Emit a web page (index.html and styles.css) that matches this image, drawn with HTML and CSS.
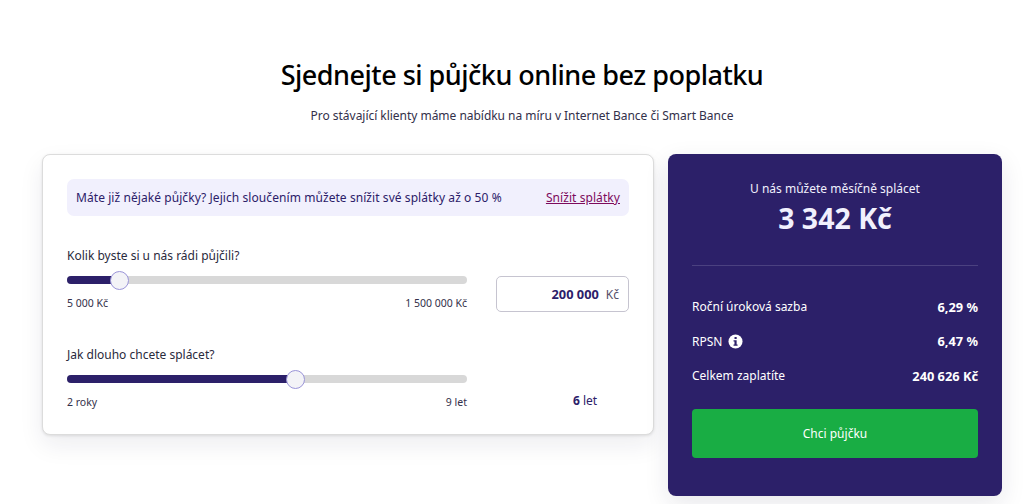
FILE: index.html
```html
<!DOCTYPE html>
<html lang="cs">
<head>
<meta charset="utf-8">
<title>Půjčka online</title>
<link rel="stylesheet" href="styles.css">
</head>
<body>
<header class="hero">
  <h1>Sjednejte si půjčku online bez poplatku</h1>
  <p>Pro stávající klienty máme nabídku na míru v Internet Bance či Smart Bance</p>
</header>
<main class="calc">
  <section class="card">
    <div class="banner">
      <span>Máte již nějaké půjčky? Jejich sloučením můžete snížit své splátky až o 50 %</span>
      <a href="#">Snížit splátky</a>
    </div>
    <div class="field first">
      <div class="slider">
        <label>Kolik byste si u nás rádi půjčili?</label>
        <div class="track"><div class="fill amount"><span class="thumb"></span></div></div>
        <div class="ends"><span>5 000 Kč</span><span>1 500 000 Kč</span></div>
      </div>
      <div class="input"><b>200 000</b><span>Kč</span></div>
    </div>
    <div class="field second">
      <div class="slider">
        <label>Jak dlouho chcete splácet?</label>
        <div class="track"><div class="fill term"><span class="thumb"></span></div></div>
        <div class="ends"><span>2 roky</span><span>9 let</span></div>
      </div>
      <div class="years"><b>6</b> let</div>
    </div>
  </section>
  <aside class="panel">
    <div class="pay-label">U nás můžete měsíčně splácet</div>
    <div class="pay-value">3 342 Kč</div>
    <hr>
    <div class="row"><span>Roční úroková sazba</span><b>6,29 %</b></div>
    <div class="row"><span class="rpsn">RPSN
      <svg viewBox="0 0 16 16" width="15" height="15"><circle cx="8" cy="8" r="7.5" fill="#fff"/><rect x="6.9" y="3.2" width="2.4" height="2.2" rx=".6" fill="#2c2069"/><path d="M5.9 6.7h3.3v4.6h1v1.3H5.9v-1.3h1V8H5.9z" fill="#2c2069"/></svg></span><b>6,47 %</b></div>
    <div class="row"><span>Celkem zaplatíte</span><b>240 626 Kč</b></div>
    <a class="cta" href="#">Chci půjčku</a>
  </aside>
</main>
</body>
</html>
```
FILE: styles.css
```css
* { box-sizing: border-box; }
html, body { margin: 0; height: 504px; overflow: hidden; background: #fff; }
body { font-family: "Noto Sans", "Open Sans", sans-serif; font-size: 12px; color: #2c2069; }
.hero { padding-top: 54px; text-align: center; width: 1044px; }
.hero h1 { margin: 0; font-size: 27px; line-height: 42px; font-weight: 500; letter-spacing: -.5px; color: #000; }
.hero p { margin: 11px 0 0; font-size: 12px; line-height: 18px; letter-spacing: -.03px; color: #33304a; }
.calc { display: flex; align-items: flex-start; gap: 14px; margin: 29px 26px 0 42px; }
.card { width: 612px; height: 281px; padding: 24px; background: #fff; border: 1px solid #dcdcdc; border-radius: 8px; box-shadow: 0 1px 3px rgba(0, 0, 0, .1), 0 10px 24px rgba(30, 30, 60, .08); }
.banner { display: flex; justify-content: space-between; align-items: center; height: 37px; padding: 0 9px; background: #f1f0fd; border-radius: 7px; letter-spacing: .07px; color: #2c2069; }
.banner a { color: #7d0a5c; }
.field { display: flex; gap: 29px; }
.first { margin-top: 31px; }
.second { margin-top: 34px; }
.slider { width: 400px; }
label { display: block; line-height: 18px; color: #2a2a3c; }
.track { height: 8px; margin-top: 11px; background: #d8d8d8; border-radius: 4px; }
.fill { position: relative; height: 8px; background: #2c2069; border-radius: 4px 0 0 4px; }
.amount { width: 52px; }
.term { width: 228px; }
.thumb { position: absolute; right: -10px; top: -5px; width: 19px; height: 19px; background: #f3f3f7; border: 1px solid #9a94d8; border-radius: 50%; }
.ends { display: flex; justify-content: space-between; margin-top: 12px; font-size: 10.5px; line-height: 15px; color: #33304a; }
.input { display: flex; justify-content: flex-end; align-items: center; gap: 7px; width: 133px; height: 36px; margin-top: 29px; padding-right: 9px; border: 1px solid #c6c4d0; border-radius: 5px; font-size: 12px; }
.input b { font-size: 12.8px; font-weight: 700; }
.input span { color: #55506a; }
.years { width: 133px; margin-top: 46px; padding-left: 77px; font-size: 12px; line-height: 18px; }
.panel { display: flex; flex-direction: column; width: 334px; height: 342px; padding: 26px 24px 38px; background: #2c2069; border-radius: 8px; color: #fff; box-shadow: 0 8px 24px rgba(30, 30, 60, .1); }
.pay-label { text-align: center; line-height: 18px; color: #f1f0fd; }
.pay-value { margin-top: 1px; text-align: center; font-size: 28.5px; line-height: 38px; font-weight: 700; color: #f1f0fd; }
hr { width: 100%; margin: 28px 0 15px; border: 0; border-top: 1px solid #4b4180; }
.row { display: flex; justify-content: space-between; align-items: center; height: 18px; margin-top: 16.5px; }
.rpsn { display: flex; align-items: center; gap: 6px; }
.row b { font-size: 12.8px; font-weight: 700; }
.cta { display: flex; align-items: center; justify-content: center; height: 49px; margin-top: 24px; background: #19ad44; border-radius: 4px; color: #fff; text-decoration: none; }
```
